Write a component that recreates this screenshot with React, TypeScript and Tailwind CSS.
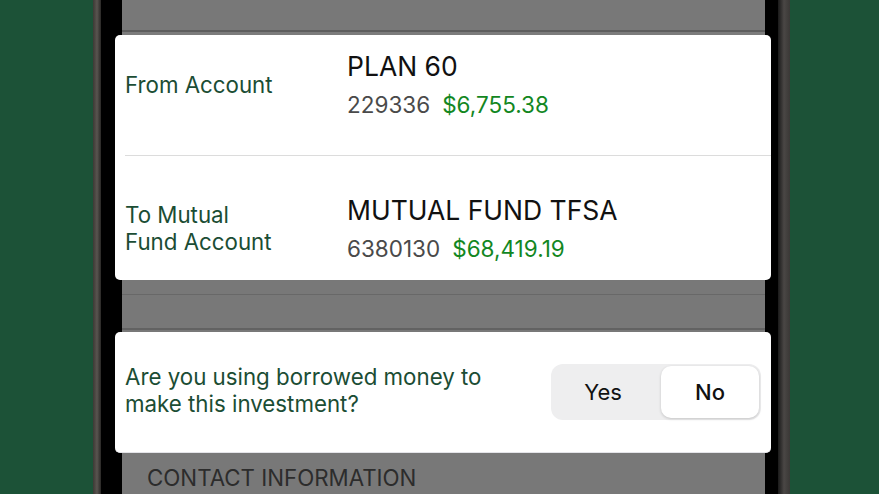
import React from "react";

const font = { fontFamily: "Inter, 'Noto Sans', Arial, sans-serif" };

function AccountRow({
  label,
  name,
  number,
  amount,
  className,
}: {
  label: React.ReactNode;
  name: string;
  number: string;
  amount: string;
  className: string;
}) {
  return (
    <div className={`grid grid-cols-[222px_1fr] items-center pl-[10px] ${className}`}>
      <div className="text-[22.3px] leading-[27px] text-[#1b4d34]">{label}</div>
      <div>
        <div className="text-[26.5px] leading-[30px] text-[#111]">{name}</div>
        <div className="mt-[10px] flex gap-[12px] text-[22.5px] leading-[27px]">
          <span className="text-[#4a4a4a]">{number}</span>
          <span className="text-[#13871f]">{amount}</span>
        </div>
      </div>
    </div>
  );
}

export default function App() {
  return (
    <div className="flex h-[494px] w-[879px] overflow-hidden bg-[#1c5237]" style={font}>
      {/* left bezel */}
      <div className="w-[93px] shrink-0" />
      <div className="w-[8px] shrink-0 bg-gradient-to-r from-[#3d3934] via-[#5a5550] to-[#2a2826]" />
      <div className="w-[21px] shrink-0 bg-black" />

      {/* screen */}
      <div className="relative z-10 flex w-[643px] shrink-0 flex-col bg-[#787878]">
        <div className="h-[30px] shrink-0" />
        <div className="h-[2px] shrink-0 bg-[#5e5e5e]" />
        <div className="h-[3px] shrink-0 bg-[#7c7c7c]" />

        <div className="-ml-[7px] -mr-[6px] h-[245px] shrink-0 rounded-[5px] bg-white">
          <AccountRow
            className="h-[120px] pb-[22px]"
            label="From Account"
            name="PLAN 60"
            number="229336"
            amount="$6,755.38"
          />
          <div className="ml-[10px] h-px bg-[#dcdcdc]" />
          <AccountRow
            className="h-[124px] pt-[20px]"
            label={
              <>
                To Mutual
                <br />
                Fund Account
              </>
            }
            name="MUTUAL FUND TFSA"
            number="6380130"
            amount="$68,419.19"
          />
        </div>

        <div className="h-[14px] shrink-0" />
        <div className="h-px shrink-0 bg-[#686868]" />
        <div className="h-[33px] shrink-0" />
        <div className="h-[2px] shrink-0 bg-[#626262]" />
        <div className="h-[2px] shrink-0" />

        <div className="-ml-[7px] -mr-[6px] flex h-[121px] shrink-0 items-center justify-between rounded-[5px] border-b border-[#e4e4e8] bg-white pl-[10px] pr-[10px]">
          <div className="pb-[5px] text-[22.3px] leading-[27px] text-[#1b4d34]">
            Are you using borrowed money to
            <br />
            make this investment?
          </div>
          <div className="flex h-[56px] w-[210px] rounded-[12px] bg-[#eeeeef] p-[2px]">
            <div className="flex flex-1 items-center justify-center pr-[8px] text-[22px] text-[#111]">Yes</div>
            <div className="flex w-[98px] items-center justify-center rounded-[10px] bg-white text-[22px] font-medium text-[#111] shadow-[0_1px_3px_rgba(0,0,0,0.18)]">
              No
            </div>
          </div>
        </div>

        <div className="pl-[25px] pt-[12px] text-[22.3px] leading-[26px] text-[#2c2c2c]">CONTACT INFORMATION</div>
      </div>

      {/* right bezel */}
      <div className="w-[13px] shrink-0 bg-black" />
      <div className="w-[12px] shrink-0 bg-gradient-to-r from-[#1a1a1a] via-[#4a4745] to-[#3a3836]" />
    </div>
  );
}
